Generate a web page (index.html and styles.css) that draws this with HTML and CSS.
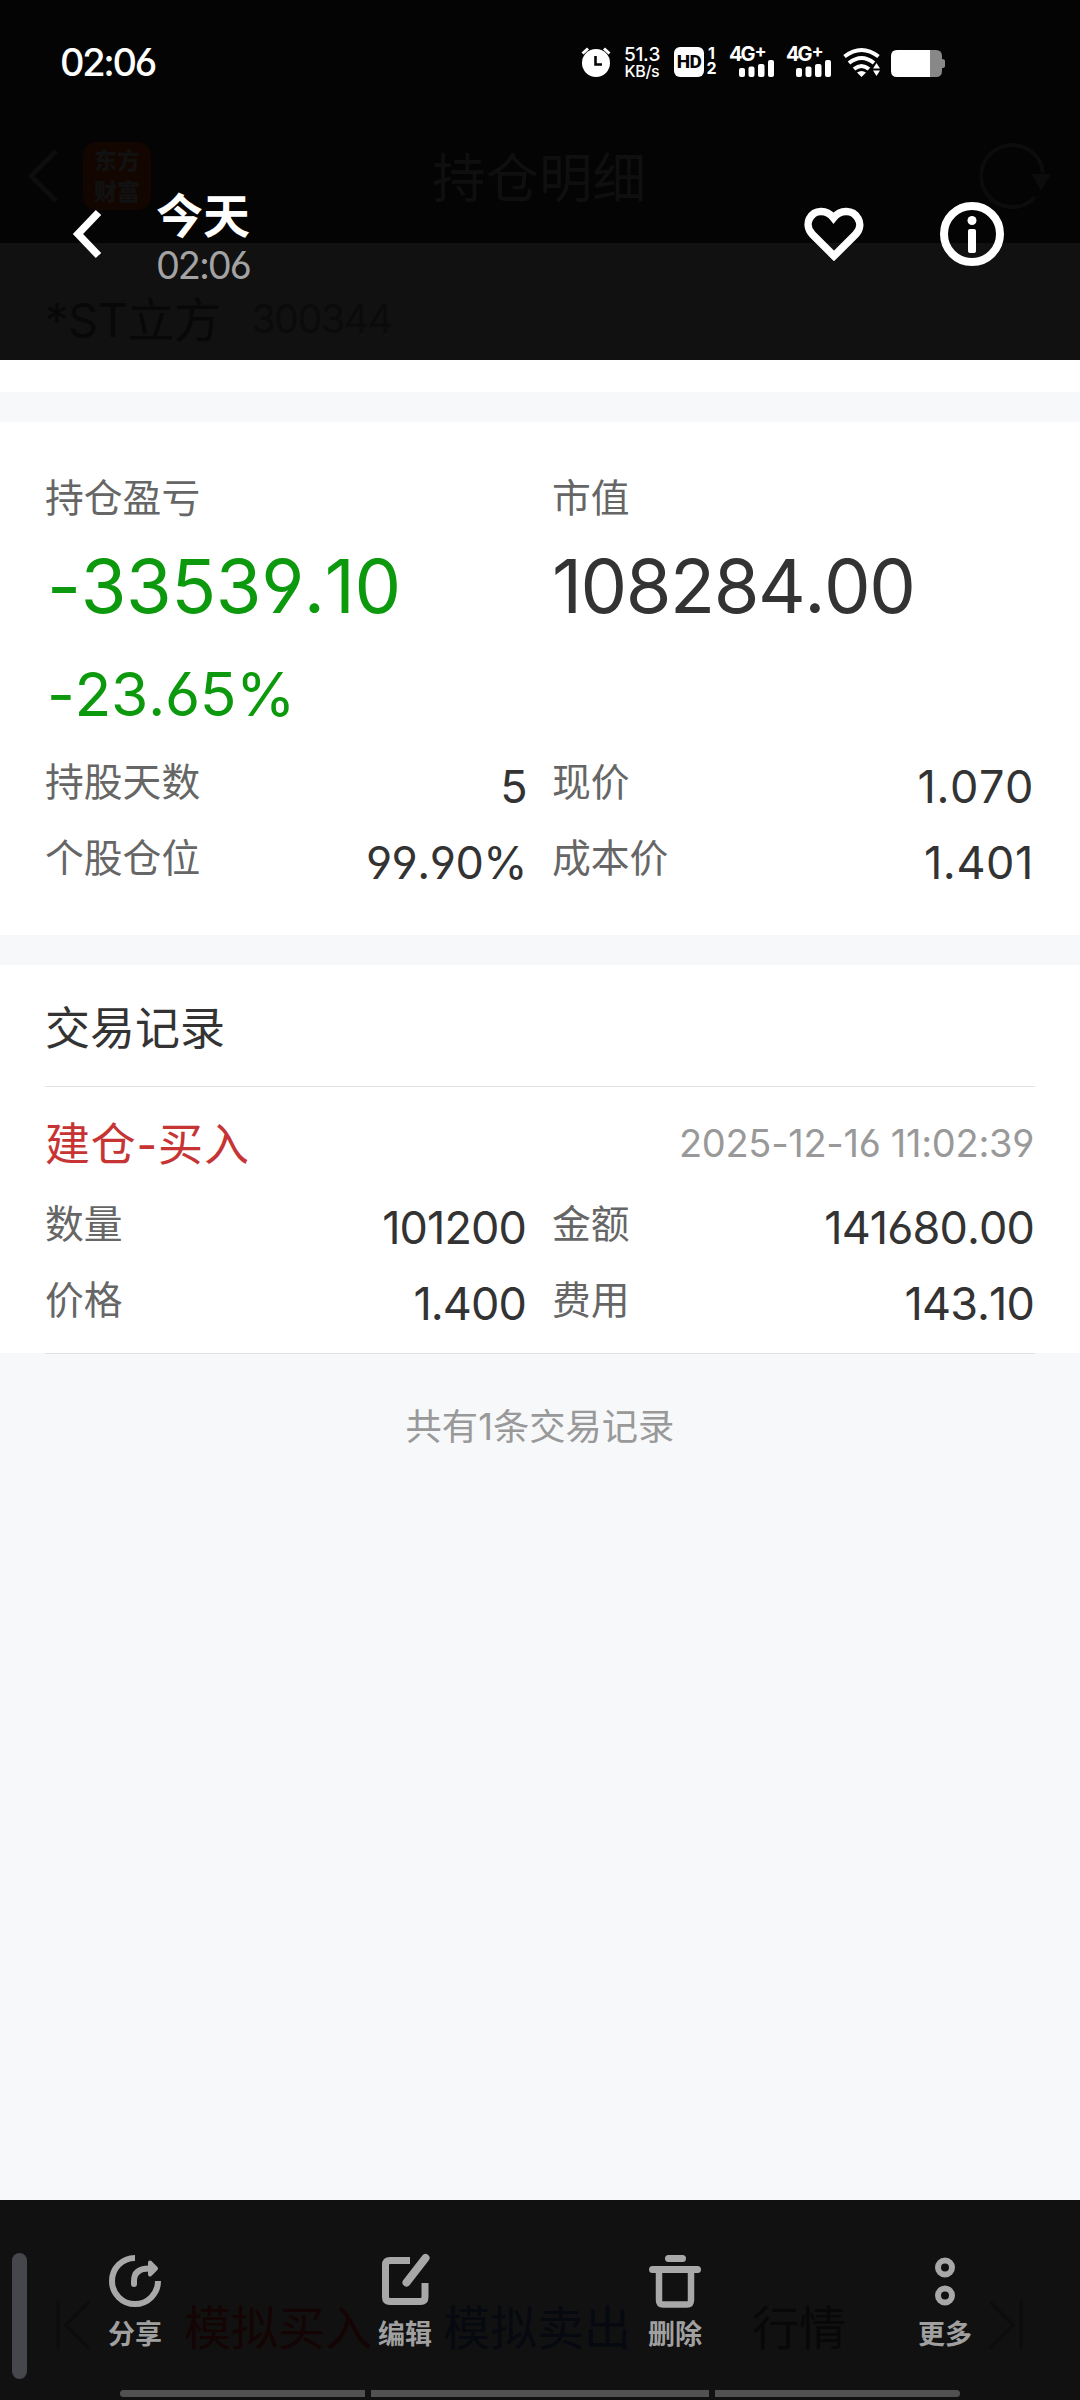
FILE: index.html
```html
<!DOCTYPE html>
<html lang="zh-CN">
<head>
<meta charset="utf-8">
<title>今天 02:06</title>
<link rel="stylesheet" href="styles.css">
</head>
<body>
<main class="photo">
  <header class="app-head">
    <svg class="app-back" width="34" height="56" viewBox="0 0 34 56"><path d="M30 3 L5 28 L30 53"/></svg>
    <div class="app-logo"><span>东方</span><span>财富</span></div>
    <h1 class="app-title">持仓明细</h1>
    <svg class="app-refresh" width="74" height="68" viewBox="0 0 74 68"><path d="M55 54 A31 31 0 1 1 63 30" fill="none" stroke-width="4"/><path class="solid" d="M52 31 H71 L61 48Z"/></svg>
  </header>
  <div class="stock"><span class="stock-name">*ST立方</span><span class="stock-code">300344</span></div>
  <div class="strip"></div>
  <section class="card position">
    <div class="col">
      <div class="label">持仓盈亏</div>
      <div class="amount green">-33539.10</div>
      <div class="percent green">-23.65%</div>
      <div class="row"><span class="key">持股天数</span><span class="val">5</span></div>
      <div class="row"><span class="key">个股仓位</span><span class="val">99.90%</span></div>
    </div>
    <div class="col">
      <div class="label">市值</div>
      <div class="amount">108284.00</div>
      <div class="percent"></div>
      <div class="row"><span class="key">现价</span><span class="val price">1.070</span></div>
      <div class="row"><span class="key">成本价</span><span class="val price">1.401</span></div>
    </div>
  </section>
  <section class="card records">
    <h2 class="records-title">交易记录</h2>
    <div class="rule"></div>
    <div class="deal"><span class="deal-type">建仓-买入</span><time class="deal-time">2025-12-16 11:02:39</time></div>
    <div class="deal-grid">
      <div class="row"><span class="key">数量</span><span class="val">101200</span></div>
      <div class="row"><span class="key">金额</span><span class="val">141680.00</span></div>
      <div class="row"><span class="key">价格</span><span class="val">1.400</span></div>
      <div class="row"><span class="key">费用</span><span class="val">143.10</span></div>
    </div>
  </section>
  <div class="rule"></div>
  <p class="total">共有1条交易记录</p>
  <footer class="app-foot">
    <svg width="36" height="48" viewBox="0 0 36 48"><path d="M2 0 V48 M33 1 L10 24 L33 47"/></svg>
    <span class="foot-item buy">模拟买入</span>
    <span class="foot-item sell">模拟卖出</span>
    <span class="foot-item quote">行情</span>
    <svg class="foot-next" width="36" height="48" viewBox="0 0 36 48"><path d="M32 0 V48 M1 1 L24 24 L1 47"/></svg>
  </footer>
</main>

<div class="viewer-top">
  <div class="status">
    <span class="clock">02:06</span>
    <div class="status-icons">
      <svg class="alarm" width="30" height="30" viewBox="0 0 30 30"><circle cx="15" cy="16" r="14" fill="#fff"/><path d="M1.500 6.500 L7 1.500 M28.500 6.500 L23 1.500" stroke="#fff" stroke-width="3"/><path d="M14.500 9 V17.500 H21" fill="none" stroke="#050505" stroke-width="2.600"/></svg>
      <div class="speed"><span class="speed-num">51.3</span><span class="speed-unit">KB/s</span></div>
      <div class="hd"><span class="hd-box">HD</span><span class="hd-sims"><b>1</b><b>2</b></span></div>
      <div class="signal"><span class="net">4G<i>+</i></span><svg width="35" height="17" viewBox="0 0 35 17" fill="#fff"><rect y="8" width="6" height="9" rx="2"/><rect x="9.500" y="6.500" width="6" height="10.500" rx="2"/><rect x="19" y="4" width="6.500" height="13" rx="2"/><rect x="29" width="6" height="17" rx="2"/></svg></div>
      <div class="signal"><span class="net">4G<i>+</i></span><svg width="35" height="17" viewBox="0 0 35 17" fill="#fff"><rect y="8" width="6" height="9" rx="2"/><rect x="9.500" y="6.500" width="6" height="10.500" rx="2"/><rect x="19" y="4" width="6.500" height="13" rx="2"/><rect x="29" width="6" height="17" rx="2"/></svg></div>
      <svg class="wifi" width="38" height="30" viewBox="0 0 38 30"><g fill="none" stroke="#fff" stroke-width="4"><path d="M1.500 9.500 Q18.500 -3.500 35.500 9.500"/><path d="M6 16 Q18.500 6 31 16"/><path d="M11 22 Q18.500 16 26 22"/></g><path d="M14 25.500 Q18.500 22.500 23 25.500 L18.500 30Z M33.500 16 L37 21.500 H30Z M30 23.500 H37 L33.500 29Z" fill="#fff"/></svg>
      <svg class="battery" width="54" height="27" viewBox="0 0 54 27"><path d="M6 0 H39 V27 H6 Q0 27 0 21 V6 Q0 0 6 0Z" fill="#fff"/><path d="M39 0 H45 Q51 0 51 6 V9 Q54 9 54 11 V16 Q54 18 51 18 V21 Q51 27 45 27 H39Z" fill="#888"/></svg>
    </div>
  </div>
  <div class="viewer-bar">
    <svg class="back" width="30" height="50" viewBox="0 0 30 50"><path d="M26.500 3.500 L6 25 L26.500 46.500" fill="none" stroke="#fff" stroke-width="7.500"/></svg>
    <div class="when"><span class="day">今天</span><span class="hour">02:06</span></div>
    <svg class="heart" width="60" height="56" viewBox="0 0 60 56"><path d="M30 49 L8.500 27.500 C4 23 3 16.500 5.500 11.500 C10.500 2.500 22.500 2 29.500 11 C36.500 2 49 2.500 54 11.500 C57 16.500 56 23 51.500 27.500Z" fill="none" stroke="#fff" stroke-width="7.500" stroke-linejoin="miter"/></svg>
    <svg class="info" width="64" height="64" viewBox="0 0 64 64"><circle cx="32" cy="32" r="28" fill="none" stroke="#fff" stroke-width="8"/><circle cx="32" cy="18.500" r="4.500" fill="#fff"/><rect x="28" y="27" width="8" height="24" rx="2" fill="#fff"/></svg>
  </div>
</div>

<nav class="viewer-actions">
  <div class="action"><svg width="56" height="56" viewBox="0 0 56 56"><path d="M28 5 A23 23 0 1 0 51 28" stroke-width="6"/><path d="M27 31 V28 Q27 15.500 42 15.500" stroke-width="6" stroke-linecap="round"/><path class="solid" d="M43 9.500 L49 15.500 L43 21.500Z" stroke-width="4" stroke-linejoin="round"/></svg><span>分享</span></div>
  <div class="action"><svg width="56" height="56" viewBox="0 0 56 56"><path d="M33 7.500 H13 Q8.500 7.500 8.500 12 V44 Q8.500 48.500 13 48.500 H43.500 Q48 48.500 48 44 V30" stroke-width="7"/><path d="M29.500 29.500 L48.500 5" stroke-width="8" stroke-linecap="round"/></svg><span>编辑</span></div>
  <div class="action"><svg width="56" height="56" viewBox="0 0 56 56"><path d="M21.500 5.500 H35.500 M5.500 16.500 H50.500" stroke-width="7" stroke-linecap="round"/><path d="M12 17 V47 Q12 51.500 16 51.500 H40 Q44 51.500 44 47 V17" stroke-width="6.500"/></svg><span>删除</span></div>
  <div class="action"><svg width="56" height="56" viewBox="0 0 56 56"><circle cx="28" cy="14.500" r="7" stroke-width="6"/><circle cx="28" cy="42.500" r="7" stroke-width="6"/></svg><span>更多</span></div>
</nav>
<div class="edge-handle"></div>
<div class="gesture"><i></i><i></i><i></i></div>
</body>
</html>
```
FILE: styles.css
```css
* { box-sizing: border-box; margin: 0; padding: 0; }

body {
  position: relative;
  width: 1080px;
  height: 2400px;
  overflow: hidden;
  background: #f7f8fa;
  color: #333;
  font-family: Inter, "Noto Sans CJK SC", sans-serif;
  font-feature-settings: "cv03", "cv04";
  font-kerning: none;
}

svg { display: block; flex: none; }

/* dimmed app header */
.photo { display: flex; flex-direction: column; height: 2400px; }
.app-head {
  display: flex;
  align-items: flex-start;
  height: 243px;
  padding: 142px 26px 0 26px;
  background: #040404;
  color: #0f0f0f;
}
.app-back { margin-top: 6px; fill: none; stroke: #0d0d0d; stroke-width: 5; }
.app-logo {
  display: flex;
  flex-direction: column;
  align-items: center;
  width: 68px;
  height: 68px;
  margin-left: 23px;
  padding-top: 2px;
  border-radius: 13px;
  background: #130500;
  color: #111;
  font: 900 23px/31px "Noto Sans CJK SC", sans-serif;
}
.app-title {
  width: 216px;
  margin: 4px 0 0 281px;
  font-size: 53.5px;
  font-weight: 400;
  line-height: 66px;
  white-space: nowrap;
}
.app-refresh { margin: 1px 0 0 332px; stroke: #0c0c0c; fill: #0c0c0c; }
.app-refresh .solid { stroke: none; }
.stock {
  display: flex;
  align-items: center;
  gap: 31px;
  height: 117px;
  padding: 34px 0 0 45px;
  background: #111;
}
.stock-name { margin-top: -4px; color: #080808; font-size: 47px; letter-spacing: -0.5px; }
.stock-code { color: #0b0b0b; font-size: 39px; letter-spacing: -1.3px; }
.strip { height: 32px; background: #fff; }

/* cards */
.card { background: #fff; }
.position {
  display: grid;
  grid-template-columns: 482px 483px;
  column-gap: 25px;
  height: 513px;
  margin-top: 30px;
  padding: 45px 45px 0;
}
.label { height: 60px; padding-top: 1px; color: #666; font-size: 38.800px; line-height: 60px; }
.amount { height: 118px; font-size: 74px; line-height: 118px; letter-spacing: -1.500px; }
.percent { height: 98px; font-size: 60.500px; line-height: 98px; }
.green { padding-left: 2px; color: #0d990d; letter-spacing: -0.4px; }
.row { display: flex; justify-content: space-between; height: 76px; line-height: 76px; }
.key { padding-top: 1px; color: #666; font-size: 38.800px; }
.val { padding-top: 6px; font-size: 45px; letter-spacing: -0.5px; }
.price { padding-right: 1px; letter-spacing: 0.6px; }

.records { height: 388px; margin-top: 30px; }
.records-title { height: 121px; padding: 3px 0 0 45px; font-size: 45px; font-weight: 400; line-height: 121px; }
.rule { flex: none; height: 1px; margin: 0 45px; background: #e2e2e2; }
.deal { display: flex; justify-content: space-between; height: 98px; padding: 14px 45px 0; line-height: 84px; }
.deal-type { padding-top: 2px; color: #c73434; font-size: 45px; letter-spacing: 0.8px; }
.deal-time { padding-right: 1px; color: #999; font-size: 38px; letter-spacing: -0.3px; }
.deal-grid { display: grid; grid-template-columns: 482px 483px; column-gap: 25px; padding: 0 45px; }
.records .val { padding: 5px 1px 0 0; letter-spacing: -0.9px; }
.total { height: 846px; padding-top: 43px; color: #999; font-size: 36.300px; line-height: 60px; text-align: center; }

/* dimmed app footer */
.app-foot {
  display: flex;
  align-items: flex-start;
  height: 200px;
  padding: 101px 56px 0;
  background: #111;
}
.app-foot svg { fill: none; stroke: #0c0c0c; stroke-width: 3; }
.foot-item { margin-top: -8px; font-size: 47px; line-height: 70px; white-space: nowrap; }
.buy { width: 188px; margin-left: 92px; color: #150404; }
.sell { width: 188px; margin-left: 71px; color: #060910; }
.quote { width: 94px; margin-left: 121px; color: #080808; }
.foot-next { margin-left: 143px; }

/* gallery viewer, top */
.viewer-top { position: absolute; top: 0; left: 0; width: 1080px; height: 360px; color: #fff; }
.status { display: flex; justify-content: space-between; height: 120px; padding: 47px 135px 0 60px; }
.clock { font-size: 38px; font-weight: 500; line-height: 31px; letter-spacing: -2.3px; }
.status-icons { display: flex; height: 30px; }
.speed { display: flex; flex-direction: column; align-items: center; width: 38px; margin-left: 12px; }
.speed-num { height: 16px; font-size: 19px; font-weight: 500; line-height: 15px; letter-spacing: -0.3px; }
.speed-unit { height: 14px; font-size: 16px; font-weight: 500; line-height: 17px; letter-spacing: -0.3px; }
.hd { display: flex; gap: 2px; margin-left: 13px; }
.hd-box {
  width: 30px;
  height: 30px;
  border-radius: 6px;
  background: #fff;
  color: #050505;
  font: 800 19px/30px Roboto, sans-serif;
  letter-spacing: -0.5px;
  text-align: center;
}
.hd-sims { display: flex; flex-direction: column; width: 11px; text-align: center; }
.hd-sims b { height: 18px; font-size: 16px; font-weight: 700; line-height: 13px; }
.signal { display: flex; flex-direction: column; align-items: flex-end; width: 45px; margin-left: 12px; }
.net { display: flex; width: 45px; height: 13px; font-size: 20px; font-weight: 700; line-height: 15px; letter-spacing: -2px; white-space: nowrap; }
.net i { margin-left: 1px; font-size: 18px; font-style: normal; line-height: 7px; }
.wifi { margin-left: 12px; }
.battery { margin: 3px 0 0 10px; }

.viewer-bar { display: flex; height: 240px; padding: 66px 75px 0 72px; }
.back { margin-top: 23px; }
.when { display: flex; flex-direction: column; width: 101px; margin-left: 54px; }
.day { height: 60px; font-size: 47px; font-weight: 700; line-height: 60px; }
.hour { height: 38px; color: #a3a3a3; font-size: 38px; line-height: 38px; letter-spacing: -2.1px; }
.heart { margin: 21px 0 0 547px; }
.info { margin: 16px 0 0 76px; }

/* gallery viewer, bottom */
.viewer-actions {
  position: absolute;
  top: 2253px;
  left: 0;
  display: grid;
  grid-template-columns: repeat(4, 270px);
}
.action { display: flex; flex-direction: column; align-items: center; color: #a0a0a0; font-size: 27px; font-weight: 600; }
.action svg { fill: none; stroke: #a8a8a8; }
.action .solid { fill: #a8a8a8; }
.action span { margin-top: 6px; line-height: 40px; }
.edge-handle { position: absolute; top: 2253px; left: 12px; width: 15px; height: 126px; border-radius: 8px; background: #46474d; }
.gesture {
  position: absolute;
  top: 2390px;
  left: 120px;
  display: grid;
  grid-template-columns: 245px 338px 245px;
  gap: 6px;
  overflow: hidden;
  border-radius: 4px;
}
.gesture i { height: 7px; background: #515151; }
```
